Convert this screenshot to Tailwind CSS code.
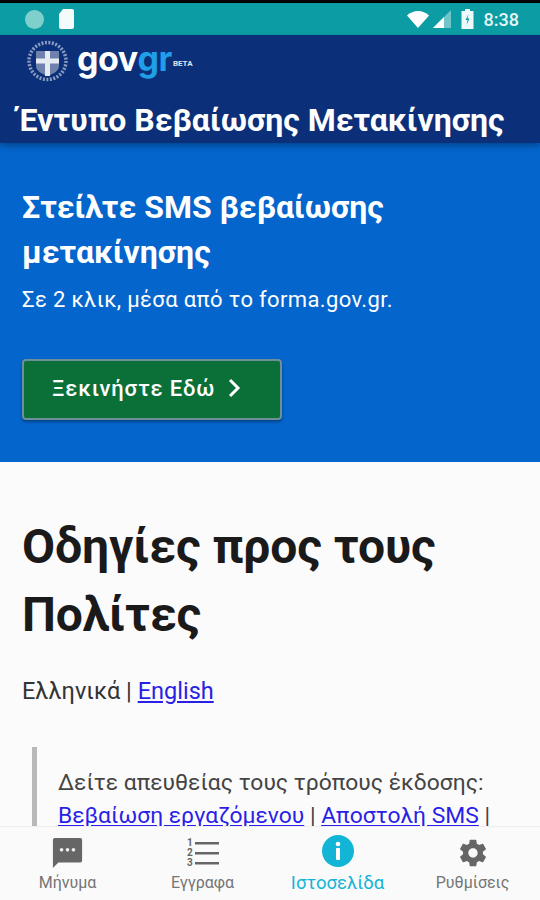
<!DOCTYPE html>
<html lang="el">
  <head>
    <meta charset="UTF-8" />
    <meta name="viewport" content="width=device-width, initial-scale=1.0" />
    <script src="https://cdn.jsdelivr.net/npm/@tailwindcss/browser@4"></script>
    <title>Έντυπο Βεβαίωσης Μετακίνησης</title>
  </head>
  <body class="bg-[#fbfbfc] font-[Roboto,sans-serif]">
    <div class="flex flex-col h-[900px] w-[540px] overflow-hidden">
      <!-- status bar -->
      <div class="h-[35px] shrink-0 border-t-[3px] border-black bg-[#0b9da3] flex items-center pl-[25px] pr-[21px] text-white">
        <div class="w-[19px] h-[19px] rounded-full bg-[#7fd0cd]"></div>
        <svg class="ml-[14px]" width="17" height="20" viewBox="0 0 17 20"><path d="M5 0H14a2 2 0 0 1 2 2V18a2 2 0 0 1-2 2H3a2 2 0 0 1-2-2V5Z" fill="#f4fbfb"/></svg>
        <div class="flex-1"></div>
        <svg width="44" height="20" viewBox="0 0 44 20">
          <path d="M0 6.500C6 0.500 16 0.500 22 6.500L11 19Z" fill="#fff"/>
          <path d="M26 19L44 1V19Z" fill="#6fc5c8"/>
          <path d="M26 19L37 8V19Z" fill="#fff"/>
        </svg>
        <svg class="ml-[10px]" width="13" height="20" viewBox="0 0 13 20"><path d="M4 0H9V2H12.500V20H0.500V2H4Z" fill="#eef9f9"/><path d="M7.500 5L4.500 11H6.500L5.500 16L8.500 9.500H6.500Z" fill="#0b9da3"/></svg>
        <span class="ml-[10px] text-[18px] font-medium text-[#e6f6f6]">8:38</span>
      </div>

      <!-- header -->
      <header class="relative z-10 h-[108px] shrink-0 bg-[#0b2f78] pl-[18px] shadow-[0_3px_6px_rgba(0,0,0,0.3)]">
        <div class="flex items-center h-[52px] pl-[9px]">
          <svg width="41" height="42" viewBox="0 0 41 42">
            <circle cx="20.500" cy="21" r="18.500" fill="none" stroke="#8c9cc0" stroke-width="3.500" stroke-dasharray="2 1.500"/>
            <path d="M9 11H32V26C32 31 26 34 20.500 36C15 34 9 31 9 26Z" fill="#6f82ad"/>
            <path d="M18 11H23V18.500H32V23.500H23V36H18V23.500H9V18.500H18Z" fill="#e6eaf3"/>
          </svg>
          <div class="ml-[9px] flex items-end -mt-[5px]">
            <span class="font-[Inter] font-bold text-[34px] leading-[38px] tracking-[-0.5px] text-white">gov</span><span class="font-[Inter] font-bold text-[34px] leading-[38px] tracking-[-0.5px] text-[#1f9fe8]">gr</span>
            <span class="ml-[1px] mb-[9px] text-[8px] leading-[10px] font-bold text-[#dfe6f3]">BETA</span>
          </div>
        </div>
        <h1 class="text-[32px] leading-[40px] font-bold text-white whitespace-nowrap mt-[13px]">Έντυπο Βεβαίωσης Μετακίνησης</h1>
      </header>

      <main class="flex-1 overflow-hidden">
        <!-- hero -->
        <section class="h-[319px] bg-[#0465cc] px-[22px] pt-[42px] text-white">
          <h2 class="text-[32px] leading-[45px] font-bold">Στείλτε SMS βεβαίωσης μετακίνησης</h2>
          <p class="mt-[10px] text-[22px] tracking-[0.36px] leading-[30px]">Σε 2 κλικ, μέσα από το forma.gov.gr.</p>
          <button class="mt-[44px] w-[260px] h-[61px] flex items-center pl-[28px] pb-[3px] rounded-[4px] bg-[#0b6f38] border-2 border-[#6c8f9a] shadow-[0_2px_3px_rgba(0,0,0,0.35)] text-[22px] font-medium tracking-[0.85px]">
            Ξεκινήστε Εδώ
            <svg class="ml-[13px]" width="13" height="20" viewBox="0 0 13 20"><path d="M2 2L10 10L2 18" fill="none" stroke="#fff" stroke-width="3"/></svg>
          </button>
        </section>

        <!-- content -->
        <section class="px-[22px] pt-[51px] text-[#1a1a1a]">
          <h2 class="text-[48px] leading-[68px] font-bold -tracking-[0.1px]">Οδηγίες προς τους Πολίτες</h2>
          <p class="mt-[27px] text-[23.500px] leading-[30px] text-[#333]">Ελληνικά | <a href="#" class="text-[#2a1fe6] underline">English</a></p>
          <div class="mt-[41px] ml-[10px] border-l-[5px] border-[#b9b9b9] pl-[21px] pt-[19px] text-[22.850px] leading-[33px] text-[#444] whitespace-nowrap">
            <p>Δείτε απευθείας τους τρόπους έκδοσης:</p>
            <p><a href="#" class="text-[#2a1fe6] underline">Βεβαίωση εργαζόμενου</a> | <a href="#" class="text-[#2a1fe6] underline">Αποστολή SMS</a> |</p>
          </div>
        </section>
      </main>

      <!-- bottom nav -->
      <nav class="relative h-[74px] shrink-0 bg-[#fafafa] border-t border-[#eeeeee] grid grid-cols-[135px_135px_135px_135px] text-[#757575]">
        <a class="flex flex-col items-center pt-[11px]">
          <svg width="31" height="31" viewBox="0 0 34 34"><path d="M3 0H31a2 2 0 0 1 2 2V25a2 2 0 0 1-2 2H7L1 33V2a2 2 0 0 1 2-2Z" fill="#666"/><circle cx="10.500" cy="13" r="2" fill="#eee"/><circle cx="17" cy="13" r="2" fill="#eee"/><circle cx="23.500" cy="13" r="2" fill="#eee"/></svg>
          <span class="text-[16px] leading-[20px] mt-[4px]">Μήνυμα</span>
        </a>
        <a class="flex flex-col items-center pt-[10px]">
          <svg width="34" height="32" viewBox="0 0 34 32" fill="#666"><rect x="9" y="5" width="24" height="2.500"/><rect x="9" y="15" width="24" height="2.500"/><rect x="9" y="25" width="24" height="2.500"/><text x="1" y="9" font-size="10" font-weight="700" font-family="Roboto">1</text><text x="1" y="19" font-size="10" font-weight="700" font-family="Roboto">2</text><text x="1" y="29" font-size="10" font-weight="700" font-family="Roboto">3</text></svg>
          <span class="text-[16px] leading-[20px] mt-[4px]">Εγγραφα</span>
        </a>
        <a class="flex flex-col items-center pt-[8px] text-[#12b5d6]">
          <svg width="32" height="32" viewBox="0 0 32 32"><circle cx="16" cy="16" r="16" fill="#12b5d6"/><rect x="14" y="13" width="4" height="12" rx="1" fill="#fff"/><circle cx="16" cy="9" r="2.300" fill="#fff"/></svg>
          <span class="text-[18.500px] leading-[20px] mt-[6px]">Ιστοσελίδα</span>
        </a>
        <a class="flex flex-col items-center pt-[10px]">
          <svg width="32" height="32" viewBox="0 0 24 24"><path fill="#666" d="M19.430 12.980c.04-.32.07-.64.07-.98s-.03-.66-.07-.98l2.110-1.650c.19-.15.24-.42.12-.64l-2-3.460c-.12-.22-.39-.3-.61-.22l-2.490 1c-.52-.4-1.080-.73-1.690-.98l-.38-2.650C14.460 2.180 14.250 2 14 2h-4c-.25 0-.46.18-.49.420l-.38 2.650c-.61.250-1.170.59-1.690.98l-2.490-1c-.23-.09-.49 0-.61.220l-2 3.460c-.13.220-.07.490.12.640l2.110 1.650c-.04.320-.07.650-.07.980s.03.660.07.980l-2.110 1.650c-.19.150-.24.420-.12.640l2 3.460c.12.220.39.300.61.220l2.490-1c.52.400 1.080.730 1.690.980l.38 2.650c.03.240.24.420.49.420h4c.25 0 .46-.18.49-.42l.38-2.650c.61-.25 1.170-.59 1.690-.98l2.490 1c.23.090.49 0 .61-.22l2-3.460c.12-.22.070-.49-.12-.64l-2.110-1.650zM12 15.500c-1.930 0-3.500-1.570-3.500-3.500s1.570-3.500 3.500-3.500 3.500 1.570 3.500 3.500-1.570 3.500-3.500 3.500z"/></svg>
          <span class="text-[16px] leading-[20px] mt-[4px]">Ρυθμίσεις</span>
        </a>
      </nav>
    </div>
  </body>
</html>
